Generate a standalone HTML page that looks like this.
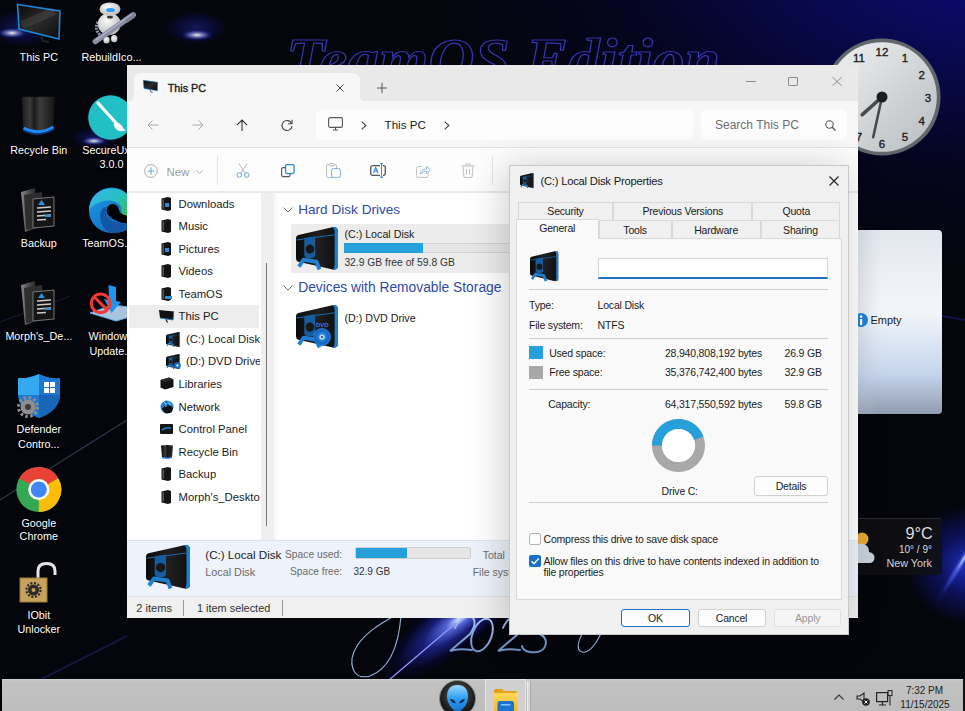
<!DOCTYPE html>
<html><head><meta charset="utf-8">
<style>
*{margin:0;padding:0;box-sizing:border-box}
html,body{width:965px;height:711px;overflow:hidden;background:#020207;font-family:"Liberation Sans",sans-serif}
.a{position:absolute}
.t{position:absolute;white-space:nowrap}
svg{overflow:visible}
#dlg .t{letter-spacing:-.2px}
</style></head><body>
<svg width="0" height="0" style="position:absolute">
<defs>
<linearGradient id="gblk" x1="0" y1="0" x2="1" y2="0"><stop offset="0" stop-color="#0a0a0a"/><stop offset=".5" stop-color="#202020"/><stop offset="1" stop-color="#0e0e0e"/></linearGradient>
<linearGradient id="gscr" x1="0" y1="0" x2="1" y2="1"><stop offset="0" stop-color="#0a0a0a"/><stop offset=".5" stop-color="#2a2a2a"/><stop offset="1" stop-color="#0d0d0d"/></linearGradient>
<linearGradient id="gbin" x1="0" y1="0" x2="1" y2="0"><stop offset="0" stop-color="#0a0a0a"/><stop offset=".35" stop-color="#3a3a3a"/><stop offset=".55" stop-color="#151515"/><stop offset="1" stop-color="#2a2a2a"/></linearGradient>
<radialGradient id="gdvd" cx=".5" cy=".5" r=".5"><stop offset="0" stop-color="#bfe4ff"/><stop offset=".3" stop-color="#2c8ee0"/><stop offset=".7" stop-color="#1565c0"/><stop offset="1" stop-color="#1e7ad8"/></radialGradient>
</defs>
<symbol id="hdd" viewBox="0 0 44 44" preserveAspectRatio="none">
  <path d="M2.5 8.2 L38 0.3 Q44 -0.8 44 5 L44 39 Q44 44.5 38.5 43.5 L2.5 35.5 Q0 35 0 32 L0 11.5 Q0 8.8 2.5 8.2 Z" fill="url(#gblk)"/>
  <path d="M38 0.3 Q44 -0.8 44 5 L44 39 Q44 44.5 38.5 43.5 Q40.5 42 40.5 38.5 L40.5 5.5 Q40.5 1.5 38 0.3 Z" fill="#1f80d2"/>
  <path d="M0.5 13.3 L40.5 8" stroke="#1a6cb0" stroke-width="1.1"/>
  <path d="M8.7 11.3 L20.1 9.5 L20.1 29 Q20 32.2 14.4 32.2 Q8.7 32.2 8.7 29 Z" fill="#175d9c"/>
  <circle cx="14.6" cy="22.6" r="4.6" fill="#181818"/>
  <path d="M3 40.5 L8 33.5 L21.5 35.5 L24.5 43.5" fill="none" stroke="#1f80d2" stroke-width="4" stroke-linejoin="round"/>
</symbol>
<symbol id="mon" viewBox="0 0 46 40">
  <path d="M1 1 L45 7 L44 33 L3 26 Z" fill="url(#gscr)" stroke="#1b7fd0" stroke-width="2"/>
  <path d="M22 30 L24 37 L30 38" stroke="#222" stroke-width="2" fill="none"/>
</symbol>
<symbol id="monsm" viewBox="0 0 15 13">
  <path d="M0 0 L15 1.5 L14 10 L1 8 Z" fill="#111"/>
  <path d="M1 8 L14 10 L15 1.5" fill="none" stroke="#1b7fd0" stroke-width=".9"/>
  <path d="M7 9.5 L8.5 12.5" stroke="#222" stroke-width="1.3"/>
</symbol>
<symbol id="fold" viewBox="0 0 11 14">
  <path d="M0.5 1.5 L7 0 L10 1 L10 13 L7 14 L0.5 12.5 Z" fill="#141414"/>
  <path d="M1.5 2.5 L3 2 L3 12 L1.5 11.5 Z" fill="#555"/>
</symbol>
<symbol id="lib" viewBox="0 0 14 13">
  <path d="M0.5 3 L9 0.5 L13.5 2.5 L13.5 10 L5 12.5 L0.5 10.5 Z" fill="#111"/>
  <path d="M0.5 3 L9 0.5 L13.5 2.5 L5 5 Z" fill="#2a2a2a"/>
</symbol>
<symbol id="net" viewBox="0 0 14 14">
  <circle cx="7" cy="7" r="6.5" fill="#1f7fd0"/>
  <path d="M2 9 Q4 5 8 5 Q11 5 13 8 L12 12 Q9 14 5 13 Z" fill="#111"/>
  <path d="M4 2 Q7 4 6 7 M9 1.5 Q8 4 11 5" stroke="#8ad0ff" stroke-width="1" fill="none"/>
</symbol>
<symbol id="cp" viewBox="0 0 13 10">
  <rect x="0" y="0" width="13" height="10" rx="1" fill="#151515"/>
  <path d="M2 6 Q6 3 11 4" stroke="#2a7ad0" stroke-width="1.6" fill="none"/>
</symbol>
<symbol id="bin" viewBox="0 0 12 14">
  <path d="M0 0.5 Q6 -0.5 12 0.5 L11 12.5 Q6 14 1 12.5 Z" fill="url(#gbin)"/>
  <path d="M1 12.3 Q6 14 11 12.3" stroke="#2a7ee8" stroke-width="1.3" fill="none"/>
</symbol>
</svg>
<div class="a" style="left:0;top:0;width:965px;height:711px;overflow:hidden;background:#05050c">
<div class="a" style="left:420px;top:-330px;width:820px;height:600px;background:radial-gradient(ellipse at 72% 45%,rgba(14,14,140,.95) 0%,rgba(10,10,110,.7) 25%,rgba(5,5,60,.35) 50%,rgba(0,0,0,0) 72%)"></div>
<div class="a" style="left:905px;top:505px;width:120px;height:120px;background:radial-gradient(ellipse at 55% 50%,rgba(40,60,240,.8) 0%,rgba(20,30,170,.5) 35%,rgba(0,0,0,0) 70%)"></div>
<div class="a" style="left:915px;top:560px;width:90px;height:10px;transform:rotate(-58deg);background:radial-gradient(ellipse at 62% 50%,rgba(220,235,255,.95) 0%,rgba(90,120,255,.6) 25%,rgba(30,40,200,.2) 55%,rgba(0,0,0,0) 75%)"></div>
<div class="a" style="left:365px;top:600px;width:160px;height:60px;transform:rotate(-38deg);background:radial-gradient(ellipse at 62% 50%,rgba(225,240,255,1) 0%,rgba(100,120,250,.85) 12%,rgba(40,50,210,.55) 32%,rgba(10,10,120,.2) 55%,rgba(0,0,0,0) 70%)"></div>
<div class="a" style="left:-8px;top:10px;width:60px;height:36px;background:radial-gradient(ellipse at 50% 50%,rgba(30,40,150,.55) 0%,rgba(15,20,110,.35) 45%,rgba(0,0,0,0) 75%)"></div>
<div class="a" style="left:166px;top:12px;width:60px;height:32px;background:radial-gradient(ellipse at 50% 50%,rgba(30,40,150,.55) 0%,rgba(15,20,110,.35) 45%,rgba(0,0,0,0) 75%)"></div>
<div class="a" style="left:71px;top:128px;width:48px;height:20px;background:radial-gradient(ellipse at 50% 50%,rgba(30,40,150,.55) 0%,rgba(15,20,110,.35) 45%,rgba(0,0,0,0) 75%)"></div>
<div class="a" style="left:-2px;top:28px;width:28px;height:10px;background:radial-gradient(ellipse at 50% 50%,rgba(250,250,230,.95) 0%,rgba(160,170,255,.6) 30%,rgba(40,50,200,.25) 60%,rgba(0,0,0,0) 80%)"></div>
<div class="a" style="left:182px;top:30px;width:30px;height:10px;background:radial-gradient(ellipse at 50% 50%,rgba(250,250,230,.95) 0%,rgba(160,170,255,.6) 30%,rgba(40,50,200,.25) 60%,rgba(0,0,0,0) 80%)"></div>
<div class="a" style="left:82px;top:137px;width:24px;height:8px;background:radial-gradient(ellipse at 50% 50%,rgba(250,250,230,.95) 0%,rgba(160,170,255,.6) 30%,rgba(40,50,200,.25) 60%,rgba(0,0,0,0) 80%)"></div>
<svg class="a" style="left:0;top:0" width="965" height="711">
<defs><linearGradient id="g25" x1="0" y1="0" x2="0" y2="1"><stop offset="0" stop-color="#a9c4ec"/><stop offset="1" stop-color="#6f92c4"/></linearGradient></defs>
<text x="286" y="79" font-family="Liberation Serif" font-style="italic" font-weight="bold" font-size="60" fill="none" stroke="#3535b0" stroke-width="1.2" textLength="434" lengthAdjust="spacingAndGlyphs">TeamOS Edition</text>
<g fill="none" stroke="url(#g25)" stroke-width="1.9" stroke-linecap="round">
<path d="M455 628 Q461 614 472 617 Q478 622 470 634 L450 651 Q458 648 472 650"/>
<ellipse cx="0" cy="0" rx="9.5" ry="17" transform="translate(482 635) rotate(22)"/>
<path d="M503 628 Q509 614 520 617 Q526 622 518 634 L498 651 Q506 648 520 650"/>
<path d="M531 622 L524 634 Q544 630 546 642 Q545 654 530 652 Q523 651 522 646"/>
</g>
<path d="M401 616 C 399 640 392 668 370 676 C 352 681 347 662 357 646 C 365 633 380 624 394 616" fill="none" stroke="#9ab4dc" stroke-width="1.1"/>
<path d="M389 680 L 456 623" stroke="#8f96ff" stroke-width="1.3"/>
<path d="M0 500 L 127 420" stroke="#34344e" stroke-width="1.2"/>
<path d="M942 316 L 965 320" stroke="#12124a" stroke-width="2"/>
<path d="M20 690 L 127 636" stroke="#141440" stroke-width="2"/>
<path d="M0 322 L 70 296" stroke="#15152a" stroke-width="1.5"/>
<path d="M606 620 C 600 640 590 654 582 652 C 575 650 578 635 590 626" fill="none" stroke="#9ab4dc" stroke-width="1.1"/>

</svg>
</div>
<svg class="a" style="left:16px;top:3px" width="46" height="40"><path d="M1.5 1.5 L44 8 L43 36 L3 26 Z" fill="url(#gscr)" stroke="#1b86d8" stroke-width="1.6"/><path d="M6 22 L38 8" stroke="rgba(255,255,255,.08)" stroke-width="8"/><path d="M25 34 L27 38 L33 39" stroke="#222" stroke-width="2" fill="none"/></svg>
<div class="t" style="left:-6.2px;top:49.5px;width:90px;text-align:center;line-height:14px;height:14px;font-size:10.8px;color:#fff;text-shadow:0 0 2px #000,1px 1px 1px #000">This PC</div>
<svg class="a" style="left:84px;top:0px" width="50" height="48">
<defs><radialGradient id="rw" cx=".4" cy=".35" r=".7"><stop offset="0" stop-color="#fafafa"/><stop offset="1" stop-color="#b8b8b8"/></radialGradient></defs>
<path d="M14 22 Q10 29 16 35" stroke="#8a92a0" stroke-width="3" stroke-dasharray="2 1" fill="none"/>
<ellipse cx="25.3" cy="24" rx="11.5" ry="11" fill="url(#rw)"/>
<ellipse cx="22.5" cy="40" rx="3.2" ry="3.6" fill="url(#rw)"/><ellipse cx="30.2" cy="38.7" rx="3.2" ry="3.6" fill="url(#rw)"/>
<ellipse cx="26" cy="17" rx="3" ry="1.6" fill="#333"/>
<ellipse cx="26" cy="9.1" rx="10.5" ry="6.7" fill="url(#rw)"/>
<ellipse cx="26.5" cy="10" rx="4.5" ry="2" fill="#2a9cf5"/>
<path d="M11.3 41.5 L49.2 14.8" stroke="#8d8ea6" stroke-width="5.5" stroke-linecap="round"/><path d="M40 18 L49.5 12 L51 17.5 L43 23 Z" fill="#7d7e96"/>
<path d="M12 40 L48 14" stroke="#b0b2c8" stroke-width="1.5"/>
</svg>
<div class="t" style="left:66.4px;top:49.5px;width:90px;text-align:center;line-height:14px;height:14px;font-size:10.8px;color:#fff;text-shadow:0 0 2px #000,1px 1px 1px #000">RebuildIco...</div>
<svg class="a" style="left:19px;top:94px" width="40" height="46">
<defs><linearGradient id="rb" x1="0" y1="0" x2="1" y2="0"><stop offset="0" stop-color="#1a1a1a"/><stop offset=".25" stop-color="#3a3a3a"/><stop offset=".38" stop-color="#1c1c1c"/><stop offset=".55" stop-color="#3c3c3c"/><stop offset="1" stop-color="#141414"/></linearGradient></defs>
<path d="M2.6 2.7 L36 2.7 L34 34 Q19.3 41 4.5 34 Z" fill="url(#rb)"/>
<path d="M4.5 34 Q19.3 42 34.5 33" stroke="#1e8cff" stroke-width="3" fill="none"/>
<path d="M4 36 Q19.3 45 35 35" stroke="#1050b0" stroke-width="2" fill="none" opacity=".6"/>
</svg>
<div class="t" style="left:-6.2px;top:142.5px;width:90px;text-align:center;line-height:14px;height:14px;font-size:10.8px;color:#fff;text-shadow:0 0 2px #000,1px 1px 1px #000">Recycle Bin</div>
<svg class="a" style="left:88px;top:95px" width="46" height="45"><circle cx="22.5" cy="22.5" r="22.3" fill="#22bfc6"/><path d="M10 8 L28 28" stroke="#fff" stroke-width="3.2" stroke-linecap="round"/><path d="M26 27 Q31 27 34 31 Q35 34 38 35 Q32 38 28 34 Q25 31 26 27 Z" fill="#fff"/></svg>
<div class="t" style="left:82.2px;top:142.5px;line-height:14px;height:14px;font-size:10.8px;color:#fff;text-shadow:0 0 2px #000,1px 1px 1px #000">SecureUxTheme</div>
<div class="t" style="left:66.4px;top:156.5px;width:90px;text-align:center;line-height:14px;height:14px;font-size:10.8px;color:#fff;text-shadow:0 0 2px #000,1px 1px 1px #000">3.0.0</div>
<svg class="a" style="left:20px;top:188px" width="36" height="44">
<defs><linearGradient id="df188" x1="0" y1="0" x2="1" y2="0"><stop offset="0" stop-color="#8a8a8a"/><stop offset=".5" stop-color="#4a4a4a"/><stop offset="1" stop-color="#222"/></linearGradient></defs>
<path d="M1 4 L15 0 L17 40 L5 44 Z" fill="url(#df188)"/><path d="M4 7 L22 4 L24 38 L6 42 Z" fill="#2e2e2e"/>
<path d="M13 11 L34 9 L34 38 L13 40 Z" fill="#151515" stroke="#777" stroke-width="1"/>
<path d="M17 20 L31 19 M17 24 L31 23 M17 28 L31 27 M17 32 L26 31.5" stroke="#ccc" stroke-width="1.3"/>
<path d="M18 17 L21.5 12 L25 17 Z" fill="#2a90e0"/><rect x="25" y="27" width="6" height="2" fill="#2a90e0"/></svg>
<div class="t" style="left:-6.2px;top:235.6px;width:90px;text-align:center;line-height:14px;height:14px;font-size:10.8px;color:#fff;text-shadow:0 0 2px #000,1px 1px 1px #000">Backup</div>
<svg class="a" style="left:88px;top:187px" width="47" height="47">
<defs><linearGradient id="edgA" x1="0" y1="0" x2="1" y2="1"><stop offset="0" stop-color="#1c9ae8"/><stop offset="1" stop-color="#0f63b8"/></linearGradient>
<linearGradient id="edgB" x1="0" y1="0" x2="1" y2=".6"><stop offset="0" stop-color="#33b4f0"/><stop offset=".6" stop-color="#28c0c0"/><stop offset="1" stop-color="#3dbb52"/></linearGradient></defs>
<circle cx="23.6" cy="23.3" r="22.7" fill="url(#edgA)"/>
<path d="M1 23 Q2 8 15 3 Q28 -1 38 6 Q46 12 46.3 22 L46.3 34 Q40 34 35 31 Q33 29 34 25 Q33 14 22 13.5 Q8 13.5 1 23 Z" fill="url(#edgB)"/>
<path d="M18.5 22.5 Q20 17 25 17 Q30 17.5 31 23 Q31.5 27 38 28.5 Q43 29.5 46.3 29 L46.3 36 Q36 38 27 33 Q18 29 18.5 22.5 Z" fill="#000"/>
<path d="M12 30 Q12 21 18.5 19.5 Q16 27 22 32 Q30 38 46 36 L43 40 Q36 46.5 24 46 Q14 44 12 30 Z" fill="#1456a6"/>
</svg>
<div class="t" style="left:82.2px;top:235.6px;line-height:14px;height:14px;font-size:10.8px;color:#fff;text-shadow:0 0 2px #000,1px 1px 1px #000">TeamOS.site</div>
<svg class="a" style="left:20px;top:281px" width="36" height="44">
<defs><linearGradient id="df281" x1="0" y1="0" x2="1" y2="0"><stop offset="0" stop-color="#8a8a8a"/><stop offset=".5" stop-color="#4a4a4a"/><stop offset="1" stop-color="#222"/></linearGradient></defs>
<path d="M1 4 L15 0 L17 40 L5 44 Z" fill="url(#df281)"/><path d="M4 7 L22 4 L24 38 L6 42 Z" fill="#2e2e2e"/>
<path d="M13 11 L34 9 L34 38 L13 40 Z" fill="#151515" stroke="#777" stroke-width="1"/>
<path d="M17 20 L31 19 M17 24 L31 23 M17 28 L31 27 M17 32 L26 31.5" stroke="#ccc" stroke-width="1.3"/>
<path d="M18 17 L21.5 12 L25 17 Z" fill="#2a90e0"/><rect x="25" y="27" width="6" height="2" fill="#2a90e0"/></svg>
<div class="t" style="left:-6.2px;top:329.0px;width:90px;text-align:center;line-height:14px;height:14px;font-size:10.8px;color:#fff;text-shadow:0 0 2px #000,1px 1px 1px #000">Morph's_De...</div>
<svg class="a" style="left:84px;top:278px" width="46" height="46">
<path d="M6 35 L28 27 L46 29 L46 39 L32 43 Z" fill="#a9c4dc" stroke="#5aa8e8" stroke-width="1"/>
<path d="M24.5 7 L32 9 L32 23 L37 24 L27.5 35 L20 21 L25 22 Z" fill="#1e96ee"/>
<circle cx="16.6" cy="25.3" r="9.3" fill="none" stroke="#f03a36" stroke-width="3"/>
<path d="M10 18.7 L23.2 31.9" stroke="#f03a36" stroke-width="3"/>
</svg>
<div class="t" style="left:88.6px;top:329.0px;line-height:14px;height:14px;font-size:10.8px;color:#fff;text-shadow:0 0 2px #000,1px 1px 1px #000">Windows</div>
<div class="t" style="left:89.5px;top:343.6px;line-height:14px;height:14px;font-size:10.8px;color:#fff;text-shadow:0 0 2px #000,1px 1px 1px #000">Update...</div>
<svg class="a" style="left:17px;top:373px" width="44" height="46">
<path d="M22 1 Q32 6 43 5 L43 22 Q42 38 22 45 Q2 38 1 22 L1 5 Q12 6 22 1 Z" fill="#1e78d0"/>
<path d="M22 1 Q12 6 1 5 L1 22 L22 22 Z" fill="#34a8f0"/>
<path d="M22 22 L43 22 Q42 38 22 45 Z" fill="#1766b8"/>
<rect x="27" y="9" width="5" height="5" fill="#fff"/><rect x="33" y="9" width="5" height="5" fill="#fff"/><rect x="27" y="15" width="5" height="5" fill="#fff"/><rect x="33" y="15" width="5" height="5" fill="#fff"/>
<g transform="translate(11,34)"><circle r="7.5" fill="#8f8f8f"/><circle r="9.5" fill="none" stroke="#8f8f8f" stroke-width="3" stroke-dasharray="2.6 2.4"/><circle r="3" fill="#3a3a3a"/></g>
</svg>
<div class="t" style="left:-6.2px;top:421.8px;width:90px;text-align:center;line-height:14px;height:14px;font-size:10.8px;color:#fff;text-shadow:0 0 2px #000,1px 1px 1px #000">Defender</div>
<div class="t" style="left:-6.2px;top:436.5px;width:90px;text-align:center;line-height:14px;height:14px;font-size:10.8px;color:#fff;text-shadow:0 0 2px #000,1px 1px 1px #000">Contro...</div>
<svg class="a" style="left:16px;top:467px" width="46" height="46">
<circle cx="22.8" cy="22.5" r="22.5" fill="#34a853"/>
<path d="M22.8 22.5 L3.3 11.25 A22.5 22.5 0 0 1 42.3 11.25 Z" fill="#ea4335"/>
<path d="M22.8 22.5 L42.3 11.25 A22.5 22.5 0 0 1 22.8 45 Z" fill="#fbbc04"/>
<circle cx="22.8" cy="22.5" r="10.5" fill="#fff"/><circle cx="22.8" cy="22.5" r="8" fill="#4285f4"/>
</svg>
<div class="t" style="left:-6.2px;top:515.6px;width:90px;text-align:center;line-height:14px;height:14px;font-size:10.8px;color:#fff;text-shadow:0 0 2px #000,1px 1px 1px #000">Google</div>
<div class="t" style="left:-6.2px;top:528.8px;width:90px;text-align:center;line-height:14px;height:14px;font-size:10.8px;color:#fff;text-shadow:0 0 2px #000,1px 1px 1px #000">Chrome</div>
<svg class="a" style="left:19px;top:561px" width="40" height="44"><path d="M19 17 V10 Q19 2.5 27.5 2.5 Q36 2.5 36 10 V14" fill="none" stroke="#e4e4e4" stroke-width="3"/><rect x="1" y="17" width="27" height="24" fill="#c7a25a"/><rect x="1" y="17" width="27" height="24" fill="none" stroke="#9a7a3a" stroke-width="1"/><g transform="translate(14.5,29)"><circle r="5.5" fill="#2a2a2a"/><circle r="7" fill="none" stroke="#2a2a2a" stroke-width="2.2" stroke-dasharray="2 1.7"/><circle r="2" fill="#c7a25a"/></g></svg>
<div class="t" style="left:-6.2px;top:607.6px;width:90px;text-align:center;line-height:14px;height:14px;font-size:10.8px;color:#fff;text-shadow:0 0 2px #000,1px 1px 1px #000">IObit</div>
<div class="t" style="left:-6.2px;top:621.7px;width:90px;text-align:center;line-height:14px;height:14px;font-size:10.8px;color:#fff;text-shadow:0 0 2px #000,1px 1px 1px #000">Unlocker</div>
<svg class="a" style="left:822px;top:37px" width="120" height="120"><defs><linearGradient id="cf" x1="0" y1="0" x2="1" y2="1"><stop offset="0" stop-color="#f0f1f2"/><stop offset="1" stop-color="#b8bcc0"/></linearGradient></defs><circle cx="60" cy="60" r="58.5" fill="#62676c"/><circle cx="60" cy="60" r="54.8" fill="url(#cf)"/><text x="83.0" y="24.7" text-anchor="middle" font-family="Liberation Sans" font-size="11.5" fill="#1a1a1a" stroke="#1a1a1a" stroke-width=".35">1</text><text x="99.8" y="41.5" text-anchor="middle" font-family="Liberation Sans" font-size="11.5" fill="#1a1a1a" stroke="#1a1a1a" stroke-width=".35">2</text><text x="106.0" y="64.5" text-anchor="middle" font-family="Liberation Sans" font-size="11.5" fill="#1a1a1a" stroke="#1a1a1a" stroke-width=".35">3</text><text x="99.8" y="87.5" text-anchor="middle" font-family="Liberation Sans" font-size="11.5" fill="#1a1a1a" stroke="#1a1a1a" stroke-width=".35">4</text><text x="83.0" y="104.3" text-anchor="middle" font-family="Liberation Sans" font-size="11.5" fill="#1a1a1a" stroke="#1a1a1a" stroke-width=".35">5</text><text x="60.0" y="110.5" text-anchor="middle" font-family="Liberation Sans" font-size="11.5" fill="#1a1a1a" stroke="#1a1a1a" stroke-width=".35">6</text><text x="37.0" y="104.3" text-anchor="middle" font-family="Liberation Sans" font-size="11.5" fill="#1a1a1a" stroke="#1a1a1a" stroke-width=".35">7</text><text x="20.2" y="87.5" text-anchor="middle" font-family="Liberation Sans" font-size="11.5" fill="#1a1a1a" stroke="#1a1a1a" stroke-width=".35">8</text><text x="14.0" y="64.5" text-anchor="middle" font-family="Liberation Sans" font-size="11.5" fill="#1a1a1a" stroke="#1a1a1a" stroke-width=".35">9</text><text x="20.2" y="41.5" text-anchor="middle" font-family="Liberation Sans" font-size="11.5" fill="#1a1a1a" stroke="#1a1a1a" stroke-width=".35">10</text><text x="37.0" y="24.7" text-anchor="middle" font-family="Liberation Sans" font-size="11.5" fill="#1a1a1a" stroke="#1a1a1a" stroke-width=".35">11</text><text x="60.0" y="18.5" text-anchor="middle" font-family="Liberation Sans" font-size="11.5" fill="#1a1a1a" stroke="#1a1a1a" stroke-width=".35">12</text><path d="M60 60 L40.299999999999955 77.7" stroke="#4a4a4a" stroke-width="3.6" stroke-linecap="round"/><path d="M60 60 L51.200000000000045 100.30000000000001" stroke="#4a4a4a" stroke-width="2.6" stroke-linecap="round"/><circle cx="60" cy="60" r="5.5" fill="#1e1e1e"/></svg>
<div class="a" style="left:840px;top:230px;width:102px;height:184px;border-radius:4px;background:linear-gradient(#e2e7ee 0%,#edf0f5 25%,#f2f5f9 45%,#dae5f4 62%,#c6d5ec 78%,#a9b6cc 90%,#8f9bb0 100%)"></div>
<div class="a" style="left:840px;top:230px;width:40px;height:184px;background:linear-gradient(90deg,rgba(200,205,215,.6),rgba(255,255,255,0))"></div>
<svg class="a" style="left:854px;top:313px" width="14" height="14"><circle cx="7" cy="7" r="7" fill="#1e7fd8"/><rect x="6" y="6" width="2.2" height="6" fill="#fff"/><circle cx="7.1" cy="3.6" r="1.3" fill="#fff"/></svg>
<div class="t" style="left:870.4px;top:312.0px;line-height:16px;height:16px;font-size:11px;color:#222;">Empty</div>
<div class="a" style="left:850px;top:518px;width:92px;height:57px;border-radius:4px;background:rgba(16,16,20,.85);border-top:1px solid #2a2a30"></div>
<svg class="a" style="left:846px;top:528px" width="30" height="36"><circle cx="16" cy="11" r="6.5" fill="#e3a535"/><path d="M4 35 Q-2 35 -1 28 Q0 22 7 22.5 Q9 15 16 15.5 Q23 16.5 23 24 Q28.5 25 28.5 30 Q28 35 23.5 35 Z" fill="#c7ced8"/></svg>
<div class="t" style="left:872.8px;top:524.0px;width:60px;text-align:right;line-height:18px;height:18px;font-size:16.3px;color:#dcdcdc;">9°C</div>
<div class="t" style="left:872.0px;top:543.0px;width:60px;text-align:right;line-height:14px;height:14px;font-size:10px;color:#dcdcdc;">10° / 9°</div>
<div class="t" style="left:872.0px;top:556.0px;width:60px;text-align:right;line-height:14px;height:14px;font-size:10.8px;color:#d0d0d0;">New York</div>
<div class="a" style="left:0;top:679px;width:2px;height:32px;background:#000"></div>
<div class="a" style="left:2px;top:679px;width:961px;height:32px;background:linear-gradient(#d2d2d2 0,#c2c2c2 2px,#bdbdbd 100%)"></div>
<div class="a" style="left:963px;top:679px;width:2px;height:32px;background:#111"></div>
<svg class="a" style="left:439px;top:680px" width="38" height="38">
<defs><radialGradient id="orb" cx=".5" cy=".4" r=".6"><stop offset="0" stop-color="#666"/><stop offset=".7" stop-color="#222"/><stop offset="1" stop-color="#111"/></radialGradient>
<linearGradient id="ali" x1="0" y1="0" x2="0" y2="1"><stop offset="0" stop-color="#9ad8ff"/><stop offset=".5" stop-color="#2b9cf0"/><stop offset="1" stop-color="#1670c8"/></linearGradient></defs>
<circle cx="18.5" cy="18.5" r="18" fill="url(#orb)" stroke="#888" stroke-width="1"/>
<path d="M18.5 5 Q29 5 29 17 Q29 26 18.5 33 Q8 26 8 17 Q8 5 18.5 5 Z" fill="url(#ali)"/>
<path d="M11 19 Q15 19 17 23 Q13 24 11 19 Z M26 19 Q22 19 20 23 Q24 24 26 19 Z" fill="#0a2a4a"/>
</svg>
<div class="a" style="left:485px;top:679px;width:41px;height:32px;background:#d0d0d0;border:1px solid #e4e4e4;border-bottom:none"></div>
<div class="a" style="left:527px;top:681px;width:4px;height:30px;background:#d8d8d8;border-left:1px solid #eee;border-right:1px solid #aaa"></div>
<svg class="a" style="left:494px;top:689px" width="24" height="22"><defs><linearGradient id="fy" x1="0" y1="0" x2="0" y2="1"><stop offset="0" stop-color="#ffd85a"/><stop offset="1" stop-color="#f2b82a"/></linearGradient></defs><path d="M0 2 Q0 0 2 0 L8 0 L10 2 L22 2 Q23 2 23 3 L23 22 L0 22 Z" fill="#e3a21a"/><rect x="0" y="4" width="23.5" height="18" fill="url(#fy)"/><path d="M3.5 22 L3.5 14.5 Q3.5 12 6 12 L17.5 12 Q20 12 20 14.5 L20 22 Z" fill="#1a74cc"/><rect x="7" y="15" width="9.5" height="1.6" fill="#7cc4ff"/></svg>
<svg class="a" style="left:834px;top:694px" width="10" height="6"><path d="M0.5 5.5 L5 1 L9.5 5.5" fill="none" stroke="#333" stroke-width="1.1"/></svg>
<svg class="a" style="left:856px;top:692px" width="14" height="14"><path d="M1 4 H4 L8 1 V10 L4 7 H1 Z" fill="none" stroke="#222" stroke-width="1.1"/><circle cx="10" cy="10" r="3.8" fill="#222"/><path d="M8.5 8.5 L11.5 11.5 M11.5 8.5 L8.5 11.5" stroke="#fff" stroke-width="1"/></svg>
<svg class="a" style="left:876px;top:690px" width="17" height="17"><rect x="0.6" y="2.6" width="11" height="9" fill="none" stroke="#222" stroke-width="1.2"/><path d="M3 15 H10 M6.5 12 V15" stroke="#222" stroke-width="1.2"/><rect x="12" y="0.6" width="4" height="5" fill="none" stroke="#222" stroke-width="1"/><path d="M14 5.6 V15.5" stroke="#222" stroke-width="1"/></svg>
<div class="t" style="left:894.5px;top:685.0px;width:60px;text-align:center;line-height:12px;height:12px;font-size:10px;color:#222;">7:32 PM</div>
<div class="t" style="left:895.0px;top:699.3px;width:60px;text-align:center;line-height:12px;height:12px;font-size:10px;color:#222;">11/15/2025</div>
<div class="a" id="ex" style="left:127px;top:65px;width:731px;height:553px;overflow:hidden;background:#fff">
<div class="a" style="left:0.0px;top:0.0px;width:731.0px;height:37.0px;background:#e9e9e9"></div>
<div class="a" style="left:7.0px;top:8.0px;width:226.0px;height:29.0px;background:#f7f7f7;border-radius:7px 7px 0 0"></div>
<div class="a" style="left:233.0px;top:30.0px;width:7.0px;height:7.0px;background:#f7f7f7"></div>
<div class="a" style="left:233.0px;top:30.0px;width:7.0px;height:7.0px;background:#e9e9e9;border-bottom-left-radius:6px"></div>
<div class="a" style="left:0.0px;top:30.0px;width:7.0px;height:7.0px;background:#f7f7f7"></div>
<div class="a" style="left:0.0px;top:30.0px;width:7.0px;height:7.0px;background:#e9e9e9;border-bottom-right-radius:6px"></div>
<svg class="a" style="left:16.0px;top:15.0px;" width="15" height="13"><use href="#mon"/></svg>
<div class="t" style="left:40.7px;top:15.0px;line-height:16px;height:16px;font-size:10.8px;color:#1a1a1a;-webkit-text-stroke:.35px #1a1a1a">This PC</div>
<svg class="a" style="left:209px;top:18.5px" width="8" height="8"><path d="M0.5 0.5 L7.5 7.5 M7.5 0.5 L0.5 7.5" stroke="#444" stroke-width="1"/></svg>
<svg class="a" style="left:249.7px;top:17.5px" width="10" height="10"><path d="M5 0 V10 M0 5 H10" stroke="#555" stroke-width="1"/></svg>
<div class="a" style="left:619.0px;top:15.5px;width:10.0px;height:1.0px;background:#8a8a8a"></div>
<div class="a" style="left:661.0px;top:11.5px;width:10.0px;height:9.0px;border:1px solid #8a8a8a;border-radius:1px"></div>
<svg class="a" style="left:704.6px;top:11.5px" width="10" height="9"><path d="M0.5 0.3 L9.5 8.7 M9.5 0.3 L0.5 8.7" stroke="#8a8a8a" stroke-width="1"/></svg>
<div class="a" style="left:0.0px;top:36.0px;width:731.0px;height:46.0px;background:#f7f7f7"></div>
<div class="a" style="left:0.0px;top:82.0px;width:731.0px;height:1.0px;background:#e3e3e3"></div>
<svg class="a" style="left:19.69999999999999px;top:54.5px" width="12" height="10"><path d="M11.5 5 H1 M5.5 0.5 L1 5 L5.5 9.5" fill="none" stroke="#a8a8a8" stroke-width="1"/></svg>
<svg class="a" style="left:64.69999999999999px;top:54.5px" width="12" height="10"><path d="M0.5 5 H11 M6.5 0.5 L11 5 L6.5 9.5" fill="none" stroke="#a8a8a8" stroke-width="1"/></svg>
<svg class="a" style="left:109.4px;top:54px" width="12" height="12"><path d="M6 12 V1 M0.8 6.2 L6 1 L11.2 6.2" fill="none" stroke="#333" stroke-width="1.1"/></svg>
<svg class="a" style="left:154.39999999999998px;top:54px" width="12" height="12"><path d="M10.6 4.5 A5 5 0 1 0 11 7" fill="none" stroke="#444" stroke-width="1.1"/><path d="M11 0.8 V4.8 H7" fill="none" stroke="#444" stroke-width="1.1"/></svg>
<div class="a" style="left:189.0px;top:45.0px;width:376.8px;height:29.6px;background:#fdfdfd;border-radius:5px"></div>
<svg class="a" style="left:201.39999999999998px;top:52px" width="15" height="14"><rect x="0.6" y="0.6" width="13.8" height="9.8" rx="1.5" fill="none" stroke="#555" stroke-width="1.1"/><path d="M5 13 H10 M7.5 10.5 V13" stroke="#555" stroke-width="1.1"/></svg>
<svg class="a" style="left:234px;top:56px" width="6" height="9"><path d="M0.7 0.7 L4.8 4.5 L0.7 8.3" fill="none" stroke="#444" stroke-width="1.1"/></svg>
<div class="t" style="left:257.6px;top:52.0px;line-height:16px;height:16px;font-size:11.6px;color:#1a1a1a;">This PC</div>
<svg class="a" style="left:317px;top:56px" width="6" height="9"><path d="M0.7 0.7 L4.8 4.5 L0.7 8.3" fill="none" stroke="#444" stroke-width="1.1"/></svg>
<div class="a" style="left:574.3px;top:45.0px;width:146.1px;height:29.6px;background:#fdfdfd;border-radius:5px"></div>
<div class="t" style="left:588.0px;top:52.0px;line-height:16px;height:16px;font-size:12px;color:#6e6e6e;">Search This PC</div>
<svg class="a" style="left:697.7px;top:54.5px" width="11" height="11"><circle cx="4.5" cy="4.5" r="3.7" fill="none" stroke="#555" stroke-width="1.1"/><path d="M7.2 7.2 L10.5 10.5" stroke="#555" stroke-width="1.3"/></svg>
<div class="a" style="left:0.0px;top:83.0px;width:731.0px;height:43.0px;background:#fdfdfd"></div>
<div class="a" style="left:0.0px;top:126.0px;width:731.0px;height:2.0px;background:#e9e9e9"></div>
<svg class="a" style="left:17px;top:98.5px" width="14" height="14"><circle cx="7" cy="7" r="6.4" fill="none" stroke="#b0b0b0" stroke-width="1"/><path d="M7 3.5 V10.5 M3.5 7 H10.5" stroke="#6aa7e0" stroke-width="1.1"/></svg>
<div class="t" style="left:39.4px;top:98.5px;line-height:16px;height:16px;font-size:11.5px;color:#a0a0a0;">New</div>
<svg class="a" style="left:69px;top:104.5px" width="7" height="4"><path d="M0.5 0.5 L3.5 3.5 L6.5 0.5" fill="none" stroke="#b0b0b0" stroke-width="1"/></svg>
<div class="a" style="left:90.2px;top:91.0px;width:1.0px;height:29.0px;background:#e6e6e6"></div>
<svg class="a" style="left:108.80000000000001px;top:98.19999999999999px" width="14" height="15"><path d="M3 0.5 L9.5 11 M11 0.5 L4.5 11" stroke="#b8b8b8" stroke-width="1"/><circle cx="3.3" cy="12" r="2.3" fill="none" stroke="#6aa7e0" stroke-width="1"/><circle cx="10.7" cy="12" r="2.3" fill="none" stroke="#6aa7e0" stroke-width="1"/></svg>
<svg class="a" style="left:153.8px;top:99.19999999999999px" width="14" height="13"><rect x="0.6" y="3.6" width="8.5" height="9" rx="1.5" fill="none" stroke="#555" stroke-width="1.1"/><rect x="4.6" y="0.6" width="8.5" height="9" rx="1.5" fill="#fdfdfd" stroke="#2b86dd" stroke-width="1.3"/></svg>
<svg class="a" style="left:198.5px;top:98px" width="15" height="15"><rect x="0.6" y="1.6" width="10" height="13" rx="1.5" fill="none" stroke="#bbb" stroke-width="1"/><rect x="3" y="0.5" width="5" height="2.5" rx="1" fill="#fdfdfd" stroke="#bbb" stroke-width="1"/><rect x="5.6" y="5.6" width="8.8" height="8.8" rx="1.5" fill="#fdfdfd" stroke="#7fb4e8" stroke-width="1"/></svg>
<svg class="a" style="left:242.5px;top:98px" width="16" height="15"><rect x="0.7" y="2.7" width="14.6" height="9.6" rx="2" fill="none" stroke="#555" stroke-width="1.3"/><rect x="10" y="1" width="3" height="13" fill="#fdfdfd"/><path d="M11.5 0.5 V14.5 M10 0.7 H13 M10 14.3 H13" stroke="#2b86dd" stroke-width="1"/><path d="M3.5 10 L5.7 4.5 L7.9 10 M4.4 8 H7" fill="none" stroke="#2b86dd" stroke-width="1.1"/></svg>
<svg class="a" style="left:289px;top:98.5px" width="15" height="14"><path d="M6 2.5 H2.5 Q0.6 2.5 0.6 4.5 V11.5 Q0.6 13.4 2.5 13.4 H10 Q12 13.4 12 11.5 V10" fill="none" stroke="#c0c0c0" stroke-width="1"/><path d="M4 10 Q5 5 10.5 5 V2 L14.3 6 L10.5 10 V7.2 Q7 7 4 10 Z" fill="none" stroke="#8fbbe8" stroke-width="1"/></svg>
<svg class="a" style="left:334.4px;top:98px" width="14" height="15"><path d="M0.5 3 H13.5 M5 3 V1 H9 V3" fill="none" stroke="#c0c0c0" stroke-width="1"/><path d="M2 3.5 L3 14.4 H11 L12 3.5" fill="none" stroke="#c0c0c0" stroke-width="1"/><path d="M5.5 6 V11.5 M8.5 6 V11.5" stroke="#c0c0c0" stroke-width="1"/></svg>
<div class="a" style="left:365.2px;top:91.0px;width:1.0px;height:29.0px;background:#e6e6e6"></div>
<div class="a" style="left:133.7px;top:128.0px;width:13.3px;height:347.0px;background:#efefef"></div>
<div class="a" style="left:147.0px;top:128.0px;width:2.5px;height:347.0px;background:#f9f9f9"></div>
<div class="a" style="left:138.8px;top:197.5px;width:1.1px;height:263.5px;background:#7a7a7a"></div>
<div class="a" style="left:2.3px;top:240.1px;width:129.9px;height:22.7px;background:#ededed;border-radius:2px"></div>
<div class="a" style="left:0;top:128px;width:133px;height:347px;overflow:hidden">
<div class="t" style="left:51.5px;top:2.5px;line-height:16px;height:16px;font-size:11.3px;color:#1c1c1c;">Downloads</div>
<svg class="a" style="left:33.5px;top:3.7px;" width="11" height="14"><use href="#fold"/></svg>
<div class="a" style="left:37.5px;top:9.5px;width:4px;height:4px;background:#2a8ee0"></div>
<div class="t" style="left:51.5px;top:25.1px;line-height:16px;height:16px;font-size:11.3px;color:#1c1c1c;">Music</div>
<svg class="a" style="left:33.5px;top:26.2px;" width="11" height="14"><use href="#fold"/></svg>
<div class="t" style="left:51.5px;top:47.6px;line-height:16px;height:16px;font-size:11.3px;color:#1c1c1c;">Pictures</div>
<svg class="a" style="left:33.5px;top:48.8px;" width="11" height="14"><use href="#fold"/></svg>
<div class="a" style="left:37.5px;top:54.599999999999994px;width:4px;height:4px;background:#2a8ee0"></div>
<div class="t" style="left:51.5px;top:70.1px;line-height:16px;height:16px;font-size:11.3px;color:#1c1c1c;">Videos</div>
<svg class="a" style="left:33.5px;top:71.3px;" width="11" height="14"><use href="#fold"/></svg>
<div class="t" style="left:51.5px;top:92.7px;line-height:16px;height:16px;font-size:11.3px;color:#1c1c1c;">TeamOS</div>
<svg class="a" style="left:33.5px;top:93.9px;" width="11" height="14"><use href="#fold"/></svg>
<div class="a" style="left:37.5px;top:102.69999999999999px;width:7px;height:3px;background:#2a8ee0"></div>
<div class="t" style="left:51.5px;top:115.2px;line-height:16px;height:16px;font-size:11.3px;color:#1c1c1c;">This PC</div>
<svg class="a" style="left:32.1px;top:116.9px;" width="15" height="13"><use href="#monsm"/></svg>
<div class="t" style="left:59.0px;top:137.8px;line-height:16px;height:16px;font-size:11.3px;color:#1c1c1c;">(C:) Local Disk</div>
<svg class="a" style="left:39.4px;top:138.7px;" width="14.2" height="15.1"><use href="#hdd"/></svg>
<div class="t" style="left:59.0px;top:160.4px;line-height:16px;height:16px;font-size:11.3px;color:#1c1c1c;">(D:) DVD Drive</div>
<svg class="a" style="left:39.4px;top:161.2px;" width="14.2" height="15.1"><use href="#hdd"/></svg>
<svg class="a" style="left:46.5px;top:168.85000000000002px" width="7" height="7"><circle cx="3.5" cy="3.5" r="3.3" fill="url(#gdvd)"/><circle cx="3.5" cy="3.5" r="1" fill="#fff"/></svg>
<div class="t" style="left:51.5px;top:182.9px;line-height:16px;height:16px;font-size:11.3px;color:#1c1c1c;">Libraries</div>
<svg class="a" style="left:32.6px;top:184.3px;" width="14" height="13"><use href="#lib"/></svg>
<div class="t" style="left:51.5px;top:205.5px;line-height:16px;height:16px;font-size:11.3px;color:#1c1c1c;">Network</div>
<svg class="a" style="left:32.6px;top:207.0px;" width="14" height="14"><use href="#net"/></svg>
<div class="t" style="left:51.5px;top:228.0px;line-height:16px;height:16px;font-size:11.3px;color:#1c1c1c;">Control Panel</div>
<svg class="a" style="left:33.0px;top:231.0px;" width="13" height="10"><use href="#cp"/></svg>
<div class="t" style="left:51.5px;top:250.6px;line-height:16px;height:16px;font-size:11.3px;color:#1c1c1c;">Recycle Bin</div>
<svg class="a" style="left:33.5px;top:251.8px;" width="12" height="14"><use href="#bin"/></svg>
<div class="t" style="left:51.5px;top:273.1px;line-height:16px;height:16px;font-size:11.3px;color:#1c1c1c;">Backup</div>
<svg class="a" style="left:33.5px;top:274.3px;" width="11" height="14"><use href="#fold"/></svg>
<div class="t" style="left:51.5px;top:295.7px;line-height:16px;height:16px;font-size:11.3px;color:#1c1c1c;">Morph's_Deskto</div>
<svg class="a" style="left:33.5px;top:296.9px;" width="11" height="14"><use href="#fold"/></svg>
</div>
<svg class="a" style="left:156.3px;top:142px" width="10" height="6"><path d="M0.5 0.5 L5 5 L9.5 0.5" fill="none" stroke="#6b6b6b" stroke-width="1"/></svg>
<div class="t" style="left:171.2px;top:136.8px;line-height:16px;height:16px;font-size:13.6px;color:#2f4aa8;">Hard Disk Drives</div>
<div class="a" style="left:163.6px;top:159.3px;width:229.4px;height:49.1px;background:#ececec"></div>
<svg class="a" style="left:169.0px;top:162.0px;" width="42" height="43"><use href="#hdd"/></svg>
<div class="t" style="left:217.4px;top:161.0px;line-height:16px;height:16px;font-size:10.7px;color:#1a1a1a;">(C:) Local Disk</div>
<div class="a" style="left:217.0px;top:177.6px;width:176.0px;height:10.9px;background:#e6e6e6;border:1px solid #d2d2d2"></div>
<div class="a" style="left:217.0px;top:177.6px;width:78.8px;height:10.9px;background:#26a0da"></div>
<div class="t" style="left:217.4px;top:189.5px;line-height:16px;height:16px;font-size:10.3px;color:#333;">32.9 GB free of 59.8 GB</div>
<svg class="a" style="left:156.3px;top:220px" width="10" height="6"><path d="M0.5 0.5 L5 5 L9.5 0.5" fill="none" stroke="#6b6b6b" stroke-width="1"/></svg>
<div class="t" style="left:171.2px;top:215.0px;line-height:16px;height:16px;font-size:13.8px;color:#2f4aa8;">Devices with Removable Storage</div>
<svg class="a" style="left:169.0px;top:240.0px;" width="42" height="43"><use href="#hdd"/></svg>
<svg class="a" style="left:186px;top:263px" width="18" height="18"><circle cx="9" cy="9" r="9" fill="url(#gdvd)"/><circle cx="9" cy="9" r="2.6" fill="#ddd"/><circle cx="9" cy="9" r="1.2" fill="#1565c0"/></svg>
<div class="t" style="left:189px;top:257px;font-size:6px;line-height:6px;color:#3a7ad8;font-weight:bold">DVD</div>
<div class="t" style="left:217.4px;top:245.0px;line-height:16px;height:16px;font-size:10.7px;color:#1a1a1a;">(D:) DVD Drive</div>
<div class="a" style="left:0.0px;top:475.0px;width:731.0px;height:56.0px;background:#eef2fa"></div>
<div class="a" style="left:0.0px;top:475.0px;width:731.0px;height:1.0px;background:#dfe5ef"></div>
<svg class="a" style="left:18.7px;top:479.7px;" width="44" height="44"><use href="#hdd"/></svg>
<div class="t" style="left:78.3px;top:482.0px;line-height:16px;height:16px;font-size:11.6px;color:#1a1a1a;">(C:) Local Disk</div>
<div class="t" style="left:78.3px;top:499.0px;line-height:16px;height:16px;font-size:10.8px;color:#6b6b6b;">Local Disk</div>
<div class="t" style="left:15.2px;top:482.0px;width:200px;text-align:right;line-height:16px;height:16px;font-size:10.3px;color:#6b6b6b;">Space used:</div>
<div class="t" style="left:15.2px;top:499.0px;width:200px;text-align:right;line-height:16px;height:16px;font-size:10.2px;color:#6b6b6b;">Space free:</div>
<div class="a" style="left:227.6px;top:482.0px;width:116.9px;height:11.6px;background:#e6e6e6;border:1px solid #cfcfcf;border-radius:2px"></div>
<div class="a" style="left:228.6px;top:483.0px;width:51.2px;height:9.6px;background:#26a0da"></div>
<div class="t" style="left:226.4px;top:499.0px;line-height:16px;height:16px;font-size:10px;color:#333;">32.9 GB</div>
<div class="t" style="left:355.7px;top:482.0px;line-height:16px;height:16px;font-size:10.5px;color:#6b6b6b;">Total</div>
<div class="t" style="left:345.7px;top:499.0px;line-height:16px;height:16px;font-size:10.5px;color:#6b6b6b;">File system:</div>
<div class="a" style="left:0.0px;top:531.0px;width:731.0px;height:22.0px;background:#f0f0f0"></div>
<div class="a" style="left:0.0px;top:531.0px;width:731.0px;height:1.0px;background:#e2e2e2"></div>
<div class="t" style="left:9.3px;top:534.8px;line-height:16px;height:16px;font-size:11.1px;color:#333;">2 items</div>
<div class="a" style="left:56.2px;top:535.0px;width:1.0px;height:16.0px;background:#9a9a9a"></div>
<div class="t" style="left:70.0px;top:534.8px;line-height:16px;height:16px;font-size:10.9px;color:#333;">1 item selected</div>
<div class="a" style="left:155.0px;top:535.0px;width:1.0px;height:16.0px;background:#9a9a9a"></div>
</div>
<div class="a" id="dlg" style="left:509px;top:165px;width:340px;height:470px;overflow:hidden;background:#f0f0f0;box-shadow:-4px 2px 36px rgba(0,0,0,.2)">
<div class="a" style="left:0.0px;top:0.0px;width:340.0px;height:470.0px;background:#f0f0f0;border:1px solid #c9c9c9"></div>
<svg class="a" style="left:11.0px;top:7.7px;" width="14" height="15.3"><use href="#hdd"/></svg>
<div class="t" style="left:31.4px;top:8.0px;line-height:16px;height:16px;font-size:11.2px;color:#1a1a1a;">(C:) Local Disk Properties</div>
<svg class="a" style="left:320px;top:10.5px" width="10" height="10"><path d="M0.5 0.5 L9.5 9.5 M9.5 0.5 L0.5 9.5" stroke="#222" stroke-width="1.1"/></svg>
<div class="a" style="left:8.7px;top:36.5px;width:95.5px;height:18.5px;background:#f0f0f0;border:1px solid #d9d9d9;border-bottom:none;"></div>
<div class="t" style="left:-43.5px;top:38.3px;width:200px;text-align:center;line-height:16px;height:16px;font-size:10.5px;color:#1a1a1a;">Security</div>
<div class="a" style="left:104.2px;top:36.5px;width:139.1px;height:18.5px;background:#f0f0f0;border:1px solid #d9d9d9;border-bottom:none;"></div>
<div class="t" style="left:73.8px;top:38.3px;width:200px;text-align:center;line-height:16px;height:16px;font-size:10.5px;color:#1a1a1a;">Previous Versions</div>
<div class="a" style="left:243.3px;top:36.5px;width:88.0px;height:18.5px;background:#f0f0f0;border:1px solid #d9d9d9;border-bottom:none;"></div>
<div class="t" style="left:187.3px;top:38.3px;width:200px;text-align:center;line-height:16px;height:16px;font-size:10.5px;color:#1a1a1a;">Quota</div>
<div class="a" style="left:89.6px;top:55.3px;width:73.0px;height:18.3px;background:#f0f0f0;border:1px solid #d9d9d9;border-bottom:none;"></div>
<div class="t" style="left:26.1px;top:57.0px;width:200px;text-align:center;line-height:16px;height:16px;font-size:10.5px;color:#1a1a1a;">Tools</div>
<div class="a" style="left:162.6px;top:55.3px;width:89.0px;height:18.3px;background:#f0f0f0;border:1px solid #d9d9d9;border-bottom:none;"></div>
<div class="t" style="left:107.1px;top:57.0px;width:200px;text-align:center;line-height:16px;height:16px;font-size:10.5px;color:#1a1a1a;">Hardware</div>
<div class="a" style="left:251.6px;top:55.3px;width:79.7px;height:18.3px;background:#f0f0f0;border:1px solid #d9d9d9;border-bottom:none;"></div>
<div class="t" style="left:191.5px;top:57.0px;width:200px;text-align:center;line-height:16px;height:16px;font-size:10.5px;color:#1a1a1a;">Sharing</div>
<div class="a" style="left:6.8px;top:73.3px;width:326.5px;height:362.0px;background:#f9f9f9;border:1px solid #d9d9d9"></div>
<div class="a" style="left:6.8px;top:53.6px;width:82.8px;height:20.9px;background:#f9f9f9;border:1px solid #d9d9d9;border-bottom:none"></div>
<div class="t" style="left:-51.8px;top:55.0px;width:200px;text-align:center;line-height:16px;height:16px;font-size:10.5px;color:#1a1a1a;">General</div>
<svg class="a" style="left:20.7px;top:85.8px;" width="28.5" height="30.5"><use href="#hdd"/></svg>
<div class="a" style="left:88.6px;top:92.6px;width:230.9px;height:21.4px;background:#fff;border:1px solid #d6d6d6;border-bottom:2px solid #1f6fc0"></div>
<div class="a" style="left:19.7px;top:123.6px;width:299.0px;height:1.1px;background:#cfcfcf"></div>
<div class="t" style="left:20.0px;top:132.0px;line-height:16px;height:16px;font-size:10.5px;color:#1c1c1c;">Type:</div>
<div class="t" style="left:88.6px;top:132.0px;line-height:16px;height:16px;font-size:10.5px;color:#1c1c1c;">Local Disk</div>
<div class="t" style="left:20.0px;top:151.6px;line-height:16px;height:16px;font-size:10.5px;color:#1c1c1c;">File system:</div>
<div class="t" style="left:88.6px;top:151.6px;line-height:16px;height:16px;font-size:10.5px;color:#1c1c1c;">NTFS</div>
<div class="a" style="left:19.7px;top:172.8px;width:299.0px;height:1.1px;background:#cfcfcf"></div>
<div class="a" style="left:20.3px;top:181.0px;width:13.9px;height:13.2px;background:#26a0da"></div>
<div class="t" style="left:40.2px;top:179.5px;line-height:16px;height:16px;font-size:10.5px;color:#1c1c1c;">Used space:</div>
<div class="t" style="left:53.0px;top:179.5px;width:200px;text-align:right;line-height:16px;height:16px;font-size:10.5px;color:#1c1c1c;">28,940,808,192 bytes</div>
<div class="t" style="left:112.7px;top:179.5px;width:200px;text-align:right;line-height:16px;height:16px;font-size:10.5px;color:#1c1c1c;">26.9 GB</div>
<div class="a" style="left:20.3px;top:200.8px;width:13.9px;height:13.2px;background:#a8a8a8"></div>
<div class="t" style="left:40.2px;top:199.4px;line-height:16px;height:16px;font-size:10.5px;color:#1c1c1c;">Free space:</div>
<div class="t" style="left:53.0px;top:199.4px;width:200px;text-align:right;line-height:16px;height:16px;font-size:10.5px;color:#1c1c1c;">35,376,742,400 bytes</div>
<div class="t" style="left:112.7px;top:199.4px;width:200px;text-align:right;line-height:16px;height:16px;font-size:10.5px;color:#1c1c1c;">32.9 GB</div>
<div class="a" style="left:19.7px;top:224.2px;width:299.0px;height:1.1px;background:#cfcfcf"></div>
<div class="t" style="left:39.2px;top:230.6px;line-height:16px;height:16px;font-size:10.5px;color:#1c1c1c;">Capacity:</div>
<div class="t" style="left:53.0px;top:230.6px;width:200px;text-align:right;line-height:16px;height:16px;font-size:10.5px;color:#1c1c1c;">64,317,550,592 bytes</div>
<div class="t" style="left:112.7px;top:230.6px;width:200px;text-align:right;line-height:16px;height:16px;font-size:10.5px;color:#1c1c1c;">59.8 GB</div>
<svg class="a" style="left:0;top:0" width="340" height="470"><circle cx="169.5" cy="280.5" r="21.5" fill="none" stroke="#a8a8a8" stroke-width="10.0"/><path d="M148.00 280.50 A21.5 21.5 0 0 1 189.70 273.15" fill="none" stroke="#26a0da" stroke-width="10.0"/><circle cx="169.5" cy="280.5" r="16.5" fill="#fff"/></svg>
<div class="t" style="left:70.7px;top:318.2px;width:200px;text-align:center;line-height:16px;height:16px;font-size:10.5px;color:#1c1c1c;">Drive C:</div>
<div class="a" style="left:245.4px;top:311.3px;width:73.3px;height:19.9px;background:#fdfdfd;border:1px solid #d0d0d0;border-radius:3px"></div>
<div class="t" style="left:182.0px;top:313.3px;width:200px;text-align:center;line-height:16px;height:16px;font-size:10.5px;color:#1c1c1c;">Details</div>
<div class="a" style="left:19.7px;top:336.7px;width:299.0px;height:1.1px;background:#cfcfcf"></div>
<div class="a" style="left:20.4px;top:368.4px;width:11.8px;height:11.6px;background:#fdfdfd;border:1px solid #b4b4b4;border-radius:2px"></div>
<div class="t" style="left:34.5px;top:366.4px;line-height:16px;height:16px;font-size:10.5px;color:#1c1c1c;">Compress this drive to save disk space</div>
<svg class="a" style="left:20.399999999999977px;top:389.5px" width="12" height="12"><rect x="0" y="0" width="12" height="12" rx="2" fill="#1a6fc8"/><path d="M2.5 6.2 L5 8.7 L9.7 3.5" fill="none" stroke="#fff" stroke-width="1.3"/></svg>
<div class="t" style="left:34.5px;top:387.5px;line-height:16px;height:16px;font-size:10.5px;color:#1c1c1c;">Allow files on this drive to have contents indexed in addition to</div>
<div class="t" style="left:34.5px;top:399.1px;line-height:16px;height:16px;font-size:10.5px;color:#1c1c1c;">file properties</div>
<div class="a" style="left:112.3px;top:443.8px;width:68.4px;height:18.7px;background:#fdfdfd;border:1px solid #1f6fc0;border-radius:3px"></div>
<div class="t" style="left:46.5px;top:445.2px;width:200px;text-align:center;line-height:16px;height:16px;font-size:10.5px;color:#1c1c1c;">OK</div>
<div class="a" style="left:188.5px;top:443.8px;width:68.0px;height:18.7px;background:#fdfdfd;border:1px solid #d0d0d0;border-radius:3px"></div>
<div class="t" style="left:122.5px;top:445.2px;width:200px;text-align:center;line-height:16px;height:16px;font-size:10.5px;color:#1c1c1c;">Cancel</div>
<div class="a" style="left:265.3px;top:443.8px;width:66.9px;height:18.7px;background:#f5f5f5;border:1px solid #e0e0e0;border-radius:3px"></div>
<div class="t" style="left:198.7px;top:445.2px;width:200px;text-align:center;line-height:16px;height:16px;font-size:10.5px;color:#9a9a9a;">Apply</div>
</div>
</body></html>
